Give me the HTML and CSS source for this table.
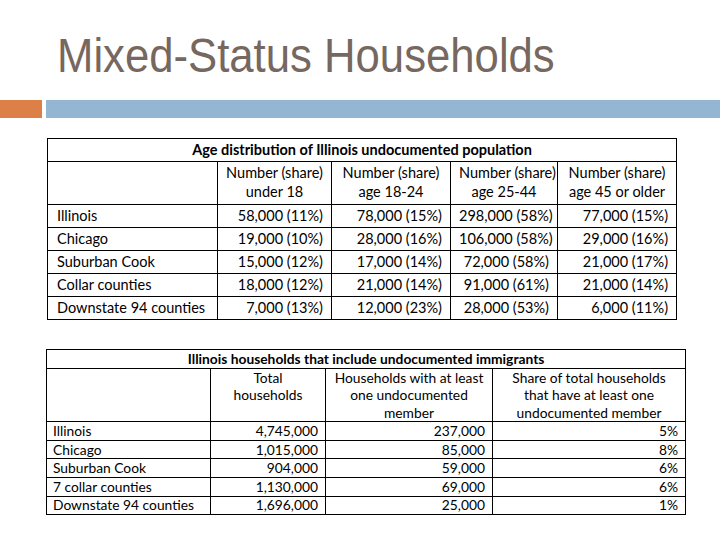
FILE: index.html
```html
<!DOCTYPE html>
<html>
<head>
  <title>Mixed-Status Households</title>
  <link rel="stylesheet" href="styles.css">
</head>
<body>
  <div class="slide">
    <h1 class="slide-title">Mixed-Status Households</h1>
    <div class="title-bar">
      <div class="bar-accent"></div>
      <div class="bar-main"></div>
    </div>

    <table class="data-table age-table">
      <colgroup>
        <col style="width: 170px">
        <col style="width: 114px">
        <col style="width: 119px">
        <col style="width: 107px">
        <col style="width: 119px">
      </colgroup>
      <tr class="caption-row">
        <th colspan="5">Age distribution of Illinois undocumented population</th>
      </tr>
      <tr class="head-row">
        <td></td>
        <td>Number (share)<br>under 18</td>
        <td>Number (share)<br>age 18-24</td>
        <td>Number (share)<br>age 25-44</td>
        <td>Number (share)<br>age 45 or older</td>
      </tr>
      <tr><td>Illinois</td><td>58,000 (11%)</td><td>78,000 (15%)</td><td>298,000 (58%)</td><td>77,000 (15%)</td></tr>
      <tr><td>Chicago</td><td>19,000 (10%)</td><td>28,000 (16%)</td><td>106,000 (58%)</td><td>29,000 (16%)</td></tr>
      <tr><td>Suburban Cook</td><td>15,000 (12%)</td><td>17,000 (14%)</td><td>72,000 (58%)</td><td>21,000 (17%)</td></tr>
      <tr><td>Collar counties</td><td>18,000 (12%)</td><td>21,000 (14%)</td><td>91,000 (61%)</td><td>21,000 (14%)</td></tr>
      <tr><td>Downstate 94 counties</td><td>7,000 (13%)</td><td>12,000 (23%)</td><td>28,000 (53%)</td><td>6,000 (11%)</td></tr>
    </table>

    <table class="data-table household-table">
      <colgroup>
        <col style="width: 164px">
        <col style="width: 115px">
        <col style="width: 167px">
        <col style="width: 193px">
      </colgroup>
      <tr class="caption-row">
        <th colspan="4">Illinois households that include undocumented immigrants</th>
      </tr>
      <tr class="head-row">
        <td></td>
        <td>Total<br>households</td>
        <td>Households with at least<br>one undocumented<br>member</td>
        <td>Share of total households<br>that have at least one<br>undocumented member</td>
      </tr>
      <tr><td>Illinois</td><td>4,745,000</td><td>237,000</td><td>5%</td></tr>
      <tr><td>Chicago</td><td>1,015,000</td><td>85,000</td><td>8%</td></tr>
      <tr><td>Suburban Cook</td><td>904,000</td><td>59,000</td><td>6%</td></tr>
      <tr><td>7 collar counties</td><td>1,130,000</td><td>69,000</td><td>6%</td></tr>
      <tr><td>Downstate 94 counties</td><td>1,696,000</td><td>25,000</td><td>1%</td></tr>
    </table>
  </div>
</body>
</html>
```

FILE: styles.css
```css
/* Slide */
body {
  margin: 0;
  background-color: #fff;
}
.slide {
  width: 720px;
  height: 540px;
  overflow: hidden;
}
.slide-title {
  margin: 32px 0 0 57px;
  font-family: "Liberation Sans", Arial, sans-serif;
  font-size: 48px;
  font-weight: normal;
  line-height: 48px;
  color: #76675f;
  transform: scaleX(0.91);
  transform-origin: left center;
  white-space: nowrap;
}
.title-bar {
  display: flex;
  gap: 4px;
  height: 18px;
  margin-top: 20px;
}
.bar-accent {
  width: 42px;
  background-color: #dd8047;
}
.bar-main {
  flex: 1;
  background-color: #94b6d2;
}

/* Tables */
.data-table {
  border-collapse: collapse;
  table-layout: fixed;
  font-family: Lato, "Noto Sans", sans-serif;
  color: #000;
  background-color: #fff;
}
.data-table th,
.data-table td {
  border: 1px solid #000;
  padding: 0 8px;
  text-align: right;
  white-space: nowrap;
  overflow: hidden;
}
.data-table td:first-child {
  text-align: left;
}
.data-table .caption-row th {
  text-align: center;
  font-weight: bold;
}
.data-table .head-row td {
  text-align: center;
  vertical-align: top;
}

.age-table {
  margin: 20px 0 0 47px;
  width: 630px;
  font-size: 14.5px;
}
.age-table th,
.age-table td {
  height: 22px;
  line-height: 20px;
}
.age-table .head-row td {
  height: 41px;
  line-height: 19px;
  padding-top: 1px;
}
.age-table td:first-child {
  padding-left: 9px;
}

.household-table {
  margin: 29px 0 0 46px;
  width: 640px;
  font-size: 13.8px;
}
.household-table th,
.household-table td {
  height: 17.6px;
  line-height: 16px;
  padding: 0 7px;
}
.household-table .caption-row th {
  height: 18px;
}
.household-table .head-row td {
  height: 52px;
  line-height: 17.4px;
  padding: 0 4px;
}
.household-table td:first-child {
  padding-left: 6px;
}
```
